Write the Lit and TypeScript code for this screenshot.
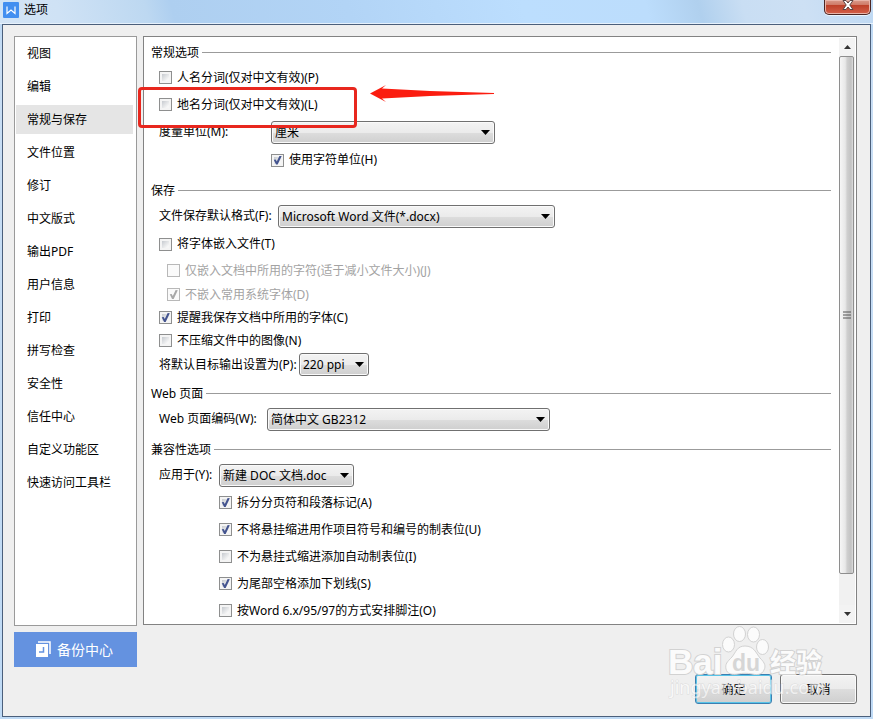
import { LitElement, html, css, svg } from "lit";
import { customElement, property, state } from "lit/decorators.js";
import { classMap } from "lit/directives/class-map.js";
import { styleMap } from "lit/directives/style-map.js";

@customElement("option-check")
class OptionCheck extends LitElement {
  @property() label = "";
  @property({ type: Boolean }) checked = false;
  @property({ type: Boolean, reflect: true }) disabled = false;

  static styles = css`
    :host {
      display: flex;
      align-items: center;
    }
    .label {
      display: flex;
      align-items: center;
      gap: 5px;
      line-height: 18px;
      white-space: nowrap;
    }
    .box {
      appearance: none;
      flex: none;
      width: 13px;
      height: 13px;
      margin: 0;
      border: 1px solid #8e8f8f;
      background: linear-gradient(135deg, #c6cacf, #f6f6f6 80%) content-box, #f4f4f4;
      padding: 2px;
      position: relative;
    }
    .box:checked::before {
      content: "";
      position: absolute;
      inset: 1px;
      background: #44548f;
      clip-path: polygon(8% 48%, 30% 44%, 42% 66%, 74% 0, 98% 4%, 52% 100%, 34% 100%);
    }
    .box:disabled {
      border-color: #b8b8b8;
      background: #fafafa;
    }
    .box:disabled::before {
      background: #a8a8a8;
    }
    :host([disabled]) .label {
      color: #a3a3a3;
    }
  `;

  render() {
    return html`<label class="label">
      <input class="box" type="checkbox" .checked=${this.checked} ?disabled=${this.disabled} />
      <span>${this.label}</span>
    </label>`;
  }
}

@customElement("option-select")
class OptionSelect extends LitElement {
  @property() label = "";
  @property() value = "";
  @property({ type: Number }) labelWidth = 0;
  @property({ type: Number }) fieldWidth = 0;

  static styles = css`
    :host {
      display: flex;
      align-items: center;
    }
    .label {
      flex: none;
      white-space: nowrap;
      line-height: 18px;
    }
    .field {
      position: relative;
      max-width: 100%;
    }
    .select {
      appearance: none;
      box-sizing: border-box;
      display: block;
      width: 100%;
      height: 23px;
      margin: 0;
      padding: 0 18px 0 3px;
      border: 1px solid #707070;
      border-radius: 3px;
      background: linear-gradient(#f3f3f3, #ebebeb 50%, #dddddd 51%, #cfcfcf);
      box-shadow: inset 0 0 0 1px #fafafa;
      color: #000;
      font-family: "Noto Sans", "Noto Sans CJK SC", sans-serif;
      font-size: 12px;
    }
    .arrow {
      position: absolute;
      right: 5px;
      top: 9px;
      width: 9px;
      height: 5px;
      pointer-events: none;
    }
  `;

  render() {
    return html`
      <label class="label" for="field" style=${styleMap({ width: `${this.labelWidth}px` })}>${this.label}</label>
      <div class="field" style=${styleMap({ width: `${this.fieldWidth}px` })}>
        <select class="select" id="field"><option>${this.value}</option></select>
        <svg class="arrow" viewBox="0 0 9 5" aria-hidden="true"><path d="M0 0h9L4.5 5z" /></svg>
      </div>
    `;
  }
}

const NAV = [
  "视图", "编辑", "常规与保存", "文件位置", "修订", "中文版式", "输出PDF",
  "用户信息", "打印", "拼写检查", "安全性", "信任中心", "自定义功能区", "快速访问工具栏",
];

const paw = svg`
  <g class="mark">
    <ellipse cx="62.500" cy="20.500" rx="6" ry="7.500" />
    <ellipse cx="73.500" cy="10" rx="6" ry="7.500" />
    <ellipse cx="87.500" cy="10.500" rx="6" ry="7.500" />
    <ellipse cx="96.500" cy="23" rx="6" ry="7.500" />
    <path d="M79 22c9 0 11 7 15 12 5 5 6 8 4 12-2 5-7 5-12 4-5-1-9-1-14 0-6 1-11 0-12-5-1-5 1-7 6-12 4-5 5-11 13-11z" />
  </g>`;

@customElement("app-root")
class AppRoot extends LitElement {
  @state() private current = "常规与保存";

  static styles = css`
    :host {
      box-sizing: border-box;
      display: flex;
      flex-direction: column;
      min-height: 100vh;
      padding: 0 2px 2px;
      color: #000;
      background: linear-gradient(#b5d5f4, #c9def4 60px, #bfdaf5);
      font-family: "Noto Sans", "Noto Sans CJK SC", sans-serif;
      font-size: 12px;
    }
    button {
      font: inherit;
      margin: 0;
    }
    .title {
      display: flex;
      align-items: flex-start;
      height: 24px;
      box-sizing: border-box;
      margin: 0 -2px;
      padding-left: 3px;
      padding-right: 2px;
      border-bottom: 1px solid #e6f1fc;
      background: linear-gradient(75deg, #d3e4f5, #cfe2f5 7%, #bdd8f1 17%, #aecff0 20%, #b2d4f6 40%, #bcdefe 60%, #bcddfc 74%, #b0d0ee 80%, #c9def3 85%, #cde0f4 92%, #bfd9f3);
    }
    .logo {
      width: 16px;
      height: 16px;
      margin-top: 2px;
    }
    .name {
      flex: 1;
      margin: 0 0 0 5px;
      font-size: 12px;
      font-weight: 400;
      line-height: 19px;
    }
    .close {
      display: flex;
      justify-content: center;
      width: 47px;
      height: 15px;
      padding: 0;
      border: 1px solid #4c2522;
      border-top: 0;
      border-radius: 0 0 5px 5px;
      background: linear-gradient(#d99b8c, #cf7966 35%, #bd3f28 36%, #d4604a);
      box-shadow: inset 0 0 0 1px #e9b5aa, 0 1px 0 #eaf4fd;
    }
    .close svg {
      width: 12px;
      height: 11px;
    }
    .dialog {
      flex: 1;
      display: grid;
      grid-template-columns: 123px minmax(0, 1fr);
      grid-template-rows: 1fr auto;
      gap: 6px;
      padding: 11px 13px 12px 11px;
      border: 1px solid #4b5f7b;
      background: #efefef;
    }
    .nav {
      display: flex;
      flex-direction: column;
      gap: 4px;
      padding: 2px 3px 2px 1px;
      border: 1px solid #9a9a9a;
      background: #fff;
    }
    .item {
      height: 29px;
      padding: 0 0 2px 11px;
      border: 0;
      background: none;
      color: inherit;
      text-align: left;
    }
    .current {
      background: #e5e5e5;
    }
    .panel {
      display: flex;
      margin-bottom: 1px;
      border: 1px solid #828282;
      background: #fff;
    }
    .content {
      flex: 1;
      min-width: 0;
      padding: 3px 7px 0;
    }
    .section {
      padding-bottom: 4px;
    }
    .section:last-child {
      padding-bottom: 0;
    }
    .heading {
      display: flex;
      align-items: center;
      gap: 3px;
      height: 24px;
      margin: 0;
      font-size: 12px;
      font-weight: 400;
    }
    .heading::after {
      content: "";
      flex: 1;
      height: 1px;
      background: #9b9b9b;
    }
    .row {
      height: 28px;
      padding-left: 8px;
    }
    .list {
      height: 27px;
    }
    .tight {
      height: 23px;
    }
    .short {
      height: 25px;
    }
    .sub {
      padding-left: 16px;
    }
    .deep {
      padding-left: 68px;
    }
    .far {
      padding-left: 120px;
    }
    .marked {
      position: relative;
    }
    .frame {
      position: absolute;
      z-index: 1;
      left: -13px;
      top: -4px;
      box-sizing: border-box;
      width: 219px;
      height: 41px;
      border: 3px solid #e8271e;
      border-radius: 4px;
      pointer-events: none;
    }
    .pointer {
      position: absolute;
      left: 219px;
      top: -6px;
      width: 124px;
      height: 18px;
      fill: #fb1d10;
    }
    .bar {
      display: flex;
      flex-direction: column;
      width: 16px;
      margin: 1px;
      background: #f1f1f1;
    }
    .step {
      display: grid;
      place-items: center;
      height: 18px;
      padding: 0;
      border: 0;
      background: #f3f3f3;
    }
    .step svg {
      width: 7px;
      height: 4px;
    }
    .thumb {
      flex: 1;
      display: grid;
      place-items: center;
      margin: 0 1px 31px 0;
      border: 1px solid #8e8e8e;
      border-radius: 2px;
      background: linear-gradient(90deg, #f6f6f6, #e8e8e8 40%, #cfcfcf 55%, #c2c2c2 85%, #dedede);
    }
    .thumb svg {
      width: 8px;
      height: 8px;
    }
    .backup {
      display: flex;
      align-items: center;
      justify-content: center;
      gap: 6px;
      height: 35px;
      padding: 0 2px 2px 0;
      border: 0;
      background: #6492e0;
      color: #fff;
    }
    .backup span {
      font-size: 14px;
    }
    .backup svg {
      width: 15px;
      height: 16px;
    }
    .actions {
      position: relative;
      display: flex;
      justify-content: flex-end;
      align-items: flex-end;
      gap: 8px;
      height: 72px;
    }
    .action {
      width: 77px;
      height: 30px;
      padding: 0;
      border: 1px solid #707070;
      border-radius: 3px;
      background: linear-gradient(#f3f3f3, #ebebeb 50%, #dddddd 51%, #cfcfcf);
      box-shadow: inset 0 0 0 1px #fafafa;
      color: #000;
    }
    .primary {
      border-color: #3c7fb1;
      box-shadow: inset 0 0 0 1px #58c4e8;
    }
    .watermark {
      position: absolute;
      right: 25px;
      bottom: 0;
      width: 166px;
      height: 80px;
      pointer-events: none;
    }
    .mark {
      fill: #fbfbfb;
      stroke: #d2d2d2;
      stroke-width: 1;
    }
    .brand {
      font: bold 35px "Liberation Sans", sans-serif;
      stroke-width: 2;
      paint-order: stroke;
    }
    .du {
      font: bold 23px "Liberation Sans", sans-serif;
      fill: #d6d6d6;
      stroke: none;
    }
    .cn {
      font: bold 26px "Noto Sans CJK SC", sans-serif;
      stroke-width: 2;
      paint-order: stroke;
    }
    .url {
      font: 18px "Noto Sans", sans-serif;
      fill: #fff;
      stroke: #d0d0d0;
      stroke-width: 1;
      paint-order: stroke;
      opacity: 0.6;
    }
  `;

  render() {
    return html`
      <header class="title">
        <svg class="logo" viewBox="0 0 16 16" aria-hidden="true">
          <rect width="16" height="16" rx="1" fill="#438ff0" />
          <path d="M4 4.500v7l4-3.500 4 3.500v-7" fill="none" stroke="#fff" stroke-width="1.200" />
        </svg>
        <h1 class="name">选项</h1>
        <button class="close" aria-label="关闭">
          <svg viewBox="0 0 12 11">
            <path d="M1 0.500h3l2 2.500 2-2.500h3L7.800 5 11 9.500H8L6 7 4 9.500H1L4.200 5z" fill="#fff" stroke="#5b4444" />
          </svg>
        </button>
      </header>
      <main class="dialog">
        <nav class="nav">
          ${NAV.map(
            (name) => html`<button
              class=${classMap({ item: true, current: name === this.current })}
              @click=${() => (this.current = name)}
            >${name}</button>`,
          )}
        </nav>
        <div class="panel">
          <div class="content">
            <section class="section">
              <h2 class="heading">常规选项</h2>
              <option-check class="row list" label="人名分词(仅对中文有效)(P)"></option-check>
              <div class="marked">
                <option-check class="row list" label="地名分词(仅对中文有效)(L)"></option-check>
                <div class="frame"></div>
                <svg class="pointer" viewBox="0 0 124 18" aria-hidden="true">
                  <path d="M0 8.500L16 0 12 3.500 60 6 124 8v1L60 11 12 13.500 16 17z" />
                </svg>
              </div>
              <option-select class="row" label="度量单位(M):" .labelWidth=${112} .fieldWidth=${224} value="厘米"></option-select>
              <option-check class="row far" label="使用字符单位(H)" checked></option-check>
            </section>
            <section class="section">
              <h2 class="heading">保存</h2>
              <option-select class="row" label="文件保存默认格式(F):" .labelWidth=${119} .fieldWidth=${277} value="Microsoft Word 文件(*.docx)"></option-select>
              <option-check class="row" label="将字体嵌入文件(T)"></option-check>
              <option-check class="row short sub" label="仅嵌入文档中所用的字符(适于减小文件大小)(J)" disabled></option-check>
              <option-check class="row tight sub" label="不嵌入常用系统字体(D)" checked disabled></option-check>
              <option-check class="row tight" label="提醒我保存文档中所用的字体(C)" checked></option-check>
              <option-check class="row tight" label="不压缩文件中的图像(N)"></option-check>
              <option-select class="row short" label="将默认目标输出设置为(P):" .labelWidth=${140} .fieldWidth=${70} value="220 ppi"></option-select>
            </section>
            <section class="section">
              <h2 class="heading">Web 页面</h2>
              <option-select class="row" label="Web 页面编码(W):" .labelWidth=${108} .fieldWidth=${283} value="简体中文 GB2312"></option-select>
            </section>
            <section class="section">
              <h2 class="heading">兼容性选项</h2>
              <option-select class="row" label="应用于(Y):" .labelWidth=${60} .fieldWidth=${135} value="新建 DOC 文档.doc"></option-select>
              <option-check class="row list deep" label="拆分分页符和段落标记(A)" checked></option-check>
              <option-check class="row list deep" label="不将悬挂缩进用作项目符号和编号的制表位(U)" checked></option-check>
              <option-check class="row list deep" label="不为悬挂式缩进添加自动制表位(I)"></option-check>
              <option-check class="row list deep" label="为尾部空格添加下划线(S)" checked></option-check>
              <option-check class="row list deep" label="按Word 6.x/95/97的方式安排脚注(O)"></option-check>
            </section>
          </div>
          <div class="bar">
            <button class="step" aria-label="向上"><svg viewBox="0 0 7 4"><path d="M0 4h7L3.500 0z" fill="#333" /></svg></button>
            <div class="thumb">
              <svg viewBox="0 0 8 8"><path d="M0 1h8M0 4h8M0 7h8" stroke="#555" /></svg>
            </div>
            <button class="step" aria-label="向下"><svg viewBox="0 0 7 4"><path d="M0 0h7L3.500 4z" fill="#333" /></svg></button>
          </div>
        </div>
        <button class="backup">
          <svg viewBox="0 0 15 16" aria-hidden="true">
            <path d="M2 1h12v12" fill="none" stroke="#fff" stroke-width="1.500" />
            <path d="M0 3h12v13H0z" fill="#fff" />
            <path d="M7.500 6v5H3" fill="none" stroke="#6492e0" stroke-width="1.500" />
          </svg>
          <span>备份中心</span>
        </button>
        <footer class="actions">
          <button class="action primary">确定</button>
          <button class="action">取消</button>
          <svg class="watermark" viewBox="0 0 166 80" aria-hidden="true">
            <text class="mark brand" x="2" y="50">Bai</text>
            ${paw}
            <text class="du" x="66" y="47">du</text>
            <text class="mark cn" x="104" y="48">经验</text>
            <text class="url" x="4" y="70">jingyan.baidu.com</text>
          </svg>
        </footer>
      </main>
    `;
  }
}
